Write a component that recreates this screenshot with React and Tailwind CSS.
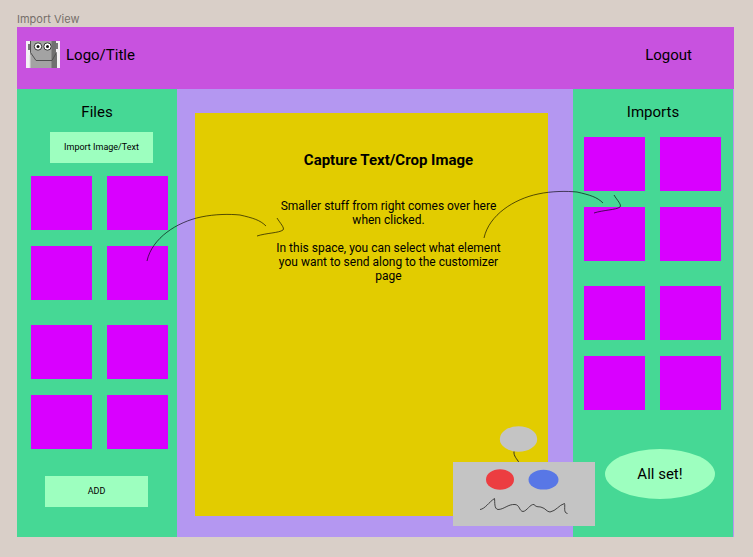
import React from "react";

function TileGrid({ label, groups }) {
  return (
    <div className="flex flex-col gap-[25px]">
      {groups.map((group, g) => (
        <div key={g} className="grid grid-cols-[61px_61px] gap-x-[15px] gap-y-4">
          {group.map((n) => (
            <button key={n} type="button" aria-label={`${label} ${n}`} className="h-[54px] bg-[#d900ff]" />
          ))}
        </div>
      ))}
    </div>
  );
}

const GROUPS = [
  [1, 2, 3, 4],
  [5, 6, 7, 8],
];

function RobotLogo() {
  return (
    <svg width="34" height="27" viewBox="0 0 34 27" aria-hidden="true">
      <rect width="34" height="27" fill="#f4f1f5" />
      <rect x="2" y="3" width="3" height="6" fill="#777" />
      <rect x="29" y="2" width="3" height="6" fill="#777" />
      <path d="M5 0H30V11L31 14V27H4V14L4 11H5Z" fill="#a3a3a3" />
      <path d="M25.500 0H30V11L31 14V27H25.500Z" fill="#707070" />
      <path d="M4 14V27" stroke="#ddd" strokeWidth="1" />
      <path d="M4.500 0V11.500L10 19.500H26L30.500 11.500" fill="none" stroke="#505050" strokeWidth="1" />
      <circle cx="12" cy="5.500" r="3.700" fill="#fff" stroke="#333" />
      <circle cx="21.500" cy="5.500" r="3.700" fill="#fff" stroke="#333" />
      <circle cx="12" cy="5.500" r="1.500" fill="#111" />
      <circle cx="21.500" cy="5.500" r="1.500" fill="#111" />
    </svg>
  );
}

function Arrow({ className }) {
  return (
    <svg
      width="140"
      height="50"
      viewBox="0 0 140 50"
      fill="none"
      stroke="#000"
      strokeOpacity="0.8"
      strokeWidth="0.8"
      aria-hidden="true"
      className={`pointer-events-none absolute z-10 ${className}`}
    >
      <path d="M1 48C6 25 31 9 55 4C69 1 84 1 94 2C107 5 114 7 120 13" />
      <path d="M131 5C134 10 139 15 137 17C133 20 120 20 111 23" />
    </svg>
  );
}

function Robot() {
  return (
    <svg
      width="142"
      height="100"
      viewBox="0 0 142 100"
      fill="none"
      aria-hidden="true"
      className="pointer-events-none absolute right-[-22px] bottom-[11px] z-10"
    >
      <ellipse cx="65.500" cy="13" rx="18.700" ry="12.800" fill="#c4c4c4" />
      <path d="M61 25.500C60.500 30 64 33 66 36.500" stroke="#222" strokeWidth="0.900" />
      <rect y="36" width="142" height="64" fill="#c4c4c4" />
      <ellipse cx="47" cy="53.500" rx="14" ry="10.300" fill="#ec3d41" />
      <ellipse cx="90.500" cy="53.700" rx="15" ry="9.900" fill="#5877e6" />
      <path
        d="M27 83.500C32 83 36 76 41.500 72.500C42 76 41 83 45 83.500C51 83.500 55 78 62 78.500C67 79 66 85 70 85.500C74 85 77 78 81 78.500C84 82 86 80 89 81.500C92 82 94 86 97 86C103 85 106 79 111.500 77.500C112.500 80 110 87 114.500 87.500"
        stroke="#333"
        strokeWidth="0.900"
      />
    </svg>
  );
}

export default function App() {
  return (
    <div className="min-h-screen bg-[#d9cfc8] pt-3 pr-[19px] pb-5 pl-[17px] font-[Roboto,sans-serif] text-black">
      <p className="h-[15px] font-[Inter,sans-serif] text-[11px] leading-[15px] text-[#77706b]">Import View</p>
      <div className="bg-[#b497f1]">
        <header className="flex h-[62px] items-center justify-between bg-[#c852df] pr-[42px] pb-[7px] pl-[9px] text-[15px] leading-5">
          <div className="flex items-center gap-[6px]">
            <RobotLogo />
            <h1>Logo/Title</h1>
          </div>
          <button type="button">Logout</button>
        </header>

        <div className="flex pr-px">
          <aside className="w-40 shrink-0 bg-[#46d895] pt-[13px] pb-[30px] pl-[14px]">
            <h2 className="mr-[14px] text-center text-[15px] leading-5">Files</h2>
            <button type="button" className="mt-[10px] mb-[13px] ml-[19px] block h-[31px] w-[103px] bg-[#9dffbf] text-[9px]">
              Import Image/Text
            </button>
            <TileGrid label="File" groups={GROUPS} />
            <button type="button" className="mt-[27px] ml-[14px] block h-[31px] w-[103px] bg-[#9dffbf] text-[9px]">
              ADD
            </button>
          </aside>

          <main className="relative flex min-w-0 flex-1 pt-6 pr-[25px] pb-[21px] pl-[18px]">
            <section className="flex flex-1 flex-col items-center bg-[#e2cc00] pt-[37px] pl-[34px] text-center">
              <h2 className="text-[15px] leading-5 font-bold">Capture Text/Crop Image</h2>
              <div className="mt-[29px] flex w-[228px] flex-col gap-[14px] text-[12px] leading-[14px]">
                <p>Smaller stuff from right comes over here when clicked.</p>
                <p>In this space, you can select what element you want to send along to the customizer page</p>
              </div>
            </section>
            <Arrow className="top-[124px] left-[-31px]" />
            <Arrow className="top-[101px] right-[-50px]" />
            <Robot />
          </main>

          <aside className="w-40 shrink-0 bg-[#46d895] pt-[13px] pl-[11px]">
            <h2 className="mr-[11px] mb-[15px] text-center text-[15px] leading-5">Imports</h2>
            <TileGrid label="Import" groups={GROUPS} />
            <button type="button" className="mt-[39px] ml-[21px] block h-[50px] w-[110px] rounded-[50%] bg-[#9dffbf] text-[15px]">
              All set!
            </button>
          </aside>
        </div>
      </div>
    </div>
  );
}
